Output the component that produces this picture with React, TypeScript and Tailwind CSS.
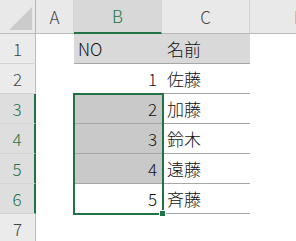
import React from 'react';

const font = { fontFamily: '"Noto Sans CJK JP", "Noto Sans", sans-serif' };

const rows: { b: string; c: string; header?: boolean }[] = [
  { b: 'NO', c: '名前', header: true },
  { b: '1', c: '佐藤' },
  { b: '2', c: '加藤' },
  { b: '3', c: '鈴木' },
  { b: '4', c: '遠藤' },
  { b: '5', c: '斉藤' },
];

const selectedRows = [3, 4, 5, 6];

function ColHeader({ label, selected }: { label: string; selected?: boolean }) {
  return (
    <div
      className={
        'flex items-center justify-center border-r border-[#d4d4d4] text-[17px] font-light ' +
        (selected
          ? 'bg-[#d8d8d8] text-[#217346] border-b-2 border-b-[#217346]'
          : 'bg-[#e9e9e9] text-[#444] border-b border-b-[#b9b9b9]')
      }
    >
      {label}
    </div>
  );
}

function RowHeader({ n }: { n: number }) {
  const sel = selectedRows.includes(n);
  return (
    <div
      className={
        'flex items-center justify-center border-b border-[#d4d4d4] text-[17px] font-light ' +
        (sel
          ? 'bg-[#dedede] text-[#217346] border-r-2 border-r-[#217346]'
          : 'bg-[#ebebeb] text-[#444] border-r border-r-[#bdbdbd]')
      }
    >
      {n}
    </div>
  );
}

export default function App() {
  return (
    <div className="w-[296px] h-[241px] overflow-hidden bg-white" style={font}>
      <div className="relative grid grid-cols-[36px_38px_88px_88px_1fr] grid-rows-[34px_repeat(7,30px)]">
        {/* corner */}
        <div className="relative bg-[#e9e9e9] border-r border-b border-[#b9b9b9]">
          <div className="absolute right-[3px] bottom-[3px] w-0 h-0 border-l-[23px] border-l-transparent border-b-[23px] border-b-[#cbcbcb]" />
        </div>
        <ColHeader label="A" />
        <ColHeader label="B" selected />
        <ColHeader label="C" />
        <div className="flex items-center justify-start pl-[44px] bg-[#e9e9e9] border-b border-[#b9b9b9] text-[17px] font-light text-[#444]">
          D
        </div>

        {rows.map((r, i) => {
          const n = i + 1;
          const sel = n >= 3 && n <= 5;
          const fill = r.header ? 'bg-[#d9d9d9]' : sel ? 'bg-[#c9c9c9]' : 'bg-white';
          return (
            <React.Fragment key={n}>
              <RowHeader n={n} />
              <div />
              <div
                className={
                  'flex items-center border-b border-[#a6a6a6] text-[17px] font-light text-[#111] ' +
                  fill +
                  (r.header ? ' justify-start pl-[4px]' : ' justify-end pr-[5px]')
                }
              >
                {r.b}
              </div>
              <div
                className={
                  'flex items-center border-b border-[#a6a6a6] pl-[5px] text-[17px] font-light text-[#111] ' +
                  (r.header ? 'bg-[#d9d9d9]' : 'bg-white')
                }
              >
                {r.c}
              </div>
              <div />
            </React.Fragment>
          );
        })}

        <RowHeader n={7} />
        <div />
        <div />
        <div />
        <div />

        {/* selection B3:B6 */}
        <div className="absolute left-[73px] top-[93px] w-[91px] h-[122px] border-2 border-[#217346] pointer-events-none">
          <div className="absolute -right-[4px] -bottom-[4px] w-[7px] h-[7px] bg-[#217346] border border-white" />
        </div>
      </div>
    </div>
  );
}
